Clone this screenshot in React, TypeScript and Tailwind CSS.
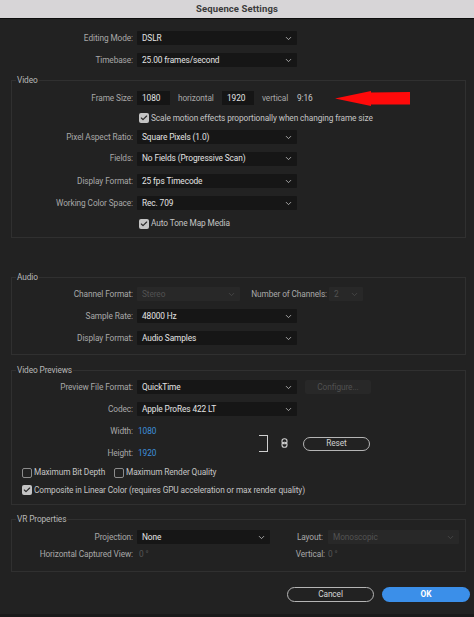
import React from "react";
import { ChevronDown, Check } from "lucide-react";

const FONT = { fontFamily: "Roboto, 'Liberation Sans', Arial, sans-serif" };

function Chevron({ dim }: { dim?: boolean }) {
  return <ChevronDown size={9} strokeWidth={2.2} className={dim ? "text-[#4a4a4a]" : "text-[#bdbdbd]"} />;
}

function Select({ value, className, disabled }: { value: string; className: string; disabled?: boolean }) {
  return (
    <div
      className={`flex items-center justify-between h-[14px] pl-[5px] pr-[4px] rounded-[1px] ${
        disabled ? "bg-[#282828] text-[#525252]" : "bg-[#161616] text-[#e4e4e4]"
      } ${className}`}
    >
      <span>{value}</span>
      <Chevron dim={disabled} />
    </div>
  );
}

function Label({ children, className }: { children: React.ReactNode; className: string }) {
  return <span className={`text-right text-[#a8a8a8] shrink-0 ${className}`}>{children}</span>;
}

function Box({ checked, className = "" }: { checked?: boolean; className?: string }) {
  return checked ? (
    <span className={`w-[10px] h-[10px] rounded-[2px] bg-[#c4c4c4] flex items-center justify-center shrink-0 ${className}`}>
      <Check size={8} strokeWidth={3.5} className="text-[#2a2a2a]" />
    </span>
  ) : (
    <span className={`block w-[10px] h-[10px] rounded-[2px] border border-[#8c8c8c] shrink-0 ${className}`} />
  );
}

function Group({ title, className, children }: { title: string; className: string; children: React.ReactNode }) {
  return (
    <fieldset className={`ml-[11px] mr-[8px] border border-[#303030] ${className}`}>
      <legend className="ml-[4px] px-[1px] leading-[10px] text-[#b8b8b8]">{title}</legend>
      {children}
    </fieldset>
  );
}

function SelRow({ label, value, h = "h-[22px]" }: { label: string; value: string; h?: string }) {
  return (
    <div className={`flex items-center ${h}`}>
      <Label className="w-[121px]">{label}</Label>
      <Select value={value} className="ml-[4px] w-[160px]" />
    </div>
  );
}

export default function App() {
  return (
    <div
      style={FONT}
      className="w-[474px] h-[617px] bg-[#222222] text-[8.3px] tracking-[-0.1px] flex flex-col overflow-hidden border-b-[3px] border-[#1a1a1a]"
    >
      {/* Title bar */}
      <div className="h-[19px] shrink-0 bg-[#d7d5d7] border-b border-[#0d0d0d] flex items-center justify-center">
        <span className="text-[9.5px] font-bold text-[#3b3b3b] tracking-[0.1px]">Sequence Settings</span>
      </div>

      {/* Top rows */}
      <div className="pt-[8px]">
        <div className="flex items-center h-[22px]">
          <Label className="w-[133px]">Editing Mode:</Label>
          <Select value="DSLR" className="ml-[4px] w-[160px]" />
        </div>
        <div className="flex items-center h-[22px]">
          <Label className="w-[133px]">Timebase:</Label>
          <Select value="25.00  frames/second" className="ml-[4px] w-[160px]" />
        </div>
      </div>

      {/* Video */}
      <Group title="Video" className="mt-[4px] pt-[2px] pb-[4px]">
        <div className="flex items-center h-[22px]">
          <Label className="w-[121px]">Frame Size:</Label>
          <div className="ml-[4px] w-[33px] h-[14px] bg-[#151515] text-[#e4e4e4] pl-[5px] flex items-center">1080</div>
          <span className="w-[52px] pl-[8px] text-[#a8a8a8]">horizontal</span>
          <div className="w-[32px] h-[14px] bg-[#151515] text-[#e4e4e4] pl-[5px] flex items-center">1920</div>
          <span className="w-[43px] pl-[8px] text-[#a8a8a8]">vertical</span>
          <span className="w-[38px] text-[#c8c8c8]">9:16</span>
          <svg width="76" height="17" viewBox="0 0 76 17" className="shrink-0">
            <polygon points="0,8.5 36,1 36,2.5 75,2 75,14.5 36,14.5 36,16" fill="#ff0a0a" />
          </svg>
        </div>
        <div className="flex items-center h-[18px] pl-[127px] gap-[2px]">
          <Box checked />
          <span className="text-[#c4c4c4]">Scale motion effects proportionally when changing frame size</span>
        </div>
        <SelRow label="Pixel Aspect Ratio:" value="Square Pixels (1.0)" h="h-[20px]" />
        <SelRow label="Fields:" value="No Fields (Progressive Scan)" h="h-[23px]" />
        <SelRow label="Display Format:" value="25 fps Timecode" />
        <SelRow label="Working Color Space:" value="Rec. 709" />
        <div className="flex items-center h-[19px] pl-[127px] gap-[2px]">
          <Box checked />
          <span className="text-[#c4c4c4]">Auto Tone Map Media</span>
        </div>
      </Group>

      {/* Audio */}
      <Group title="Audio" className="mt-[34px] pt-[1px] pb-[5px]">
        <div className="flex items-center h-[22px]">
          <Label className="w-[121px]">Channel Format:</Label>
          <Select value="Stereo" disabled className="ml-[4px] w-[103px]" />
          <Label className="w-[87px]">Number of Channels:</Label>
          <Select value="2" disabled className="ml-[2px] w-[34px]" />
        </div>
        <SelRow label="Sample Rate:" value="48000 Hz" />
        <SelRow label="Display Format:" value="Audio Samples" />
      </Group>

      {/* Video Previews */}
      <Group title="Video Previews" className="mt-[10px] pt-[1px] pb-[5px]">
        <div className="flex items-center h-[22px]">
          <Label className="w-[121px]">Preview File Format:</Label>
          <Select value="QuickTime" className="ml-[4px] w-[160px]" />
          <div className="ml-[8px] w-[66px] h-[14px] rounded-[2px] bg-[#282828] text-[#505050] flex items-center justify-center">
            Configure...
          </div>
        </div>
        <SelRow label="Codec:" value="Apple ProRes 422 LT" />
        <div className="flex items-center">
          <div className="w-[247px] shrink-0">
            <div className="flex items-center h-[22px]">
              <Label className="w-[121px]">Width:</Label>
              <span className="ml-[5px] text-[#3d8fdc]">1080</span>
            </div>
            <div className="flex items-center h-[22px]">
              <Label className="w-[121px]">Height:</Label>
              <span className="ml-[5px] text-[#3d8fdc]">1920</span>
            </div>
          </div>
          <div className="mt-[3px] w-[9px] h-[17px] border-t-[1.5px] border-r-[1.5px] border-b-[1.5px] border-[#cfcfcf]" />
          <svg width="7" height="10" viewBox="0 0 7 10" className="ml-[13px] mt-[1px] shrink-0">
            <rect x="1" y="0.7" width="5" height="5" rx="2.3" fill="none" stroke="#cfcfcf" strokeWidth="1.1" />
            <rect x="1" y="4.3" width="5" height="5" rx="2.3" fill="none" stroke="#cfcfcf" strokeWidth="1.1" />
          </svg>
          <div className="ml-[15px] mt-[3px] w-[67px] h-[14px] rounded-full border border-[#b5b5b5] text-[#d0d0d0] flex items-center justify-center">
            Reset
          </div>
        </div>
        <div className="flex items-center h-[17px] pl-[10px]">
          <Box />
          <span className="ml-[2px] w-[80px] text-[#c4c4c4]">Maximum Bit Depth</span>
          <Box />
          <span className="ml-[2px] text-[#c4c4c4]">Maximum Render Quality</span>
        </div>
        <div className="flex items-center h-[18px] pl-[10px] gap-[2px]">
          <Box checked />
          <span className="text-[#c4c4c4]">Composite in Linear Color (requires GPU acceleration or max render quality)</span>
        </div>
      </Group>

      {/* VR Properties */}
      <Group title="VR Properties" className="mt-[9px] pt-[2px] pb-[10px]">
        <div className="flex items-center h-[22px]">
          <Label className="w-[121px]">Projection:</Label>
          <Select value="None" className="ml-[4px] w-[133px]" />
          <Label className="w-[53px]">Layout:</Label>
          <Select value="Monoscopic" disabled className="ml-[5px] w-[131px]" />
        </div>
        <div className="flex items-center h-[13px]">
          <Label className="w-[121px]">Horizontal Captured View:</Label>
          <span className="ml-[4px] w-[133px] pl-[2px] text-[#555555]">0 °</span>
          <Label className="w-[55px]">Vertical:</Label>
          <span className="ml-[3px] text-[#555555]">0 °</span>
        </div>
      </Group>

      {/* Buttons */}
      <div className="mt-[15px] flex justify-end gap-[8px] pr-[4px]">
        <div className="w-[87px] h-[15px] rounded-full border border-[#b5b5b5] text-[#d6d6d6] flex items-center justify-center">
          Cancel
        </div>
        <div className="w-[88px] h-[15px] rounded-full bg-[#3b8fe9] text-white font-bold flex items-center justify-center">
          OK
        </div>
      </div>
    </div>
  );
}
